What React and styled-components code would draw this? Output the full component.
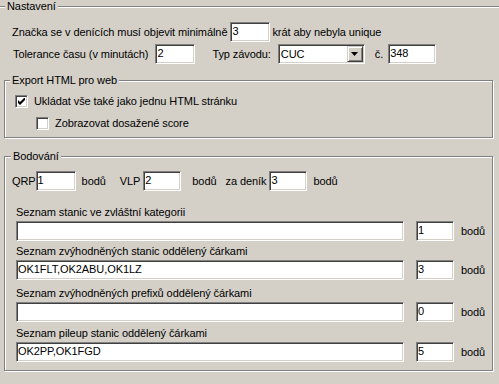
import React from 'react'
import styled, { createGlobalStyle } from 'styled-components'

const GlobalStyle = createGlobalStyle`
  html, body {
    margin: 0;
    padding: 0;
    background: #d4d0c8;
  }
  body {
    width: 499px;
    height: 384px;
    overflow: hidden;
    font-family: "Liberation Sans", Arial, sans-serif;
    font-size: 11px;
    letter-spacing: -0.08px;
    color: #000;
  }
`

const Outer = styled.section`
  margin-top: 6px;
  border-top: 1px solid #808080;
  box-shadow: inset 0 1px #fff;
`

const Group = styled.section`
  margin: ${p => p.$top}px 6px 0 4px;
  border: 1px solid #808080;
  box-shadow: inset 1px 1px #fff, 1px 1px #fff;
  padding-bottom: ${p => p.$bottom}px;
`

const Legend = styled.div`
  width: fit-content;
  margin: -7px 0 0 ${p => p.$indent}px;
  padding: 0 2px;
  line-height: 13px;
  height: 13px;
  background: #d4d0c8;
`

const Row = styled.div`
  display: flex;
  align-items: center;
  height: 20px;
  margin-top: ${p => p.$top || 0}px;
  padding-left: ${p => p.$left || 0}px;
  white-space: nowrap;
`

const Text = styled.span`
  margin-left: ${p => p.$ml || 0}px;
  margin-right: ${p => p.$mr || 0}px;
`

const Edit = styled.div`
  box-sizing: border-box;
  width: ${p => p.$w}px;
  height: 20px;
  flex: none;
  padding: 0 1px;
  line-height: 16px;
  background: #fff;
  border: 1px solid;
  border-color: #808080 #fff #fff #808080;
  box-shadow: inset 1px 1px #404040, inset -1px -1px #d4d0c8;
  margin-left: ${p => p.$ml || 0}px;
  margin-right: ${p => p.$mr || 0}px;
  overflow: hidden;
`

const Combo = styled(Edit)`
  display: flex;
  align-items: center;
  justify-content: space-between;
  padding: 1px;
`

const ComboText = styled.span`
  padding-left: 1px;
`

const DropButton = styled.div`
  box-sizing: border-box;
  width: 16px;
  height: 16px;
  display: flex;
  align-items: center;
  justify-content: center;
  background: #d4d0c8;
  border: 1px solid;
  border-color: #d4d0c8 #404040 #404040 #d4d0c8;
  box-shadow: inset 1px 1px #fff, inset -1px -1px #808080;
`

const CheckBox = styled.div`
  box-sizing: border-box;
  width: 13px;
  height: 13px;
  flex: none;
  background: #fff;
  border: 1px solid;
  border-color: #808080 #fff #fff #808080;
  box-shadow: inset 1px 1px #404040, inset -1px -1px #d4d0c8;
  display: flex;
  align-items: center;
  justify-content: center;
  margin-right: 6px;
`

const ListItem = styled.div`
  margin-top: ${p => p.$top}px;
  padding-left: 11px;
`

const ListLabel = styled.div`
  line-height: 14px;
  height: 14px;
  margin-bottom: 2px;
  white-space: nowrap;
`

const Check = ({ checked }) => (
  <CheckBox>
    {checked && (
      <svg width="7" height="7" viewBox="0 0 7 7">
        <path d="M0 2 L0 5 L2 7 L7 2 L7 -1 L2 4 Z" fill="#000" />
      </svg>
    )}
  </CheckBox>
)

const lists = [
  { label: 'Seznam stanic ve zvláštní kategorii', value: '', points: '1', top: 14 },
  { label: 'Seznam zvýhodněných stanic oddělený čárkami', value: 'OK1FLT,OK2ABU,OK1LZ', points: '3', top: 3 },
  { label: 'Seznam zvýhodněných prefixů oddělený čárkami', value: '', points: '0', top: 6 },
  { label: 'Seznam pileup stanic oddělený čárkami', value: 'OK2PP,OK1FGD', points: '5', top: 4 }
]

const App = () => (
  <>
    <GlobalStyle />
    <Outer>
      <Legend $indent={5}>Nastavení</Legend>
      <Row $top={9} $left={12}>
        <Text $mr={3}>Značka se v denících musí objevit minimálně</Text>
        <Edit $w={40} $mr={2}>3</Edit>
        <Text>krát aby nebyla unique</Text>
      </Row>
      <Row $top={2} $left={13}>
        <Text $mr={7}>Tolerance času (v minutách)</Text>
        <Edit $w={40}>2</Edit>
        <Text $ml={17} $mr={7}>Typ závodu:</Text>
        <Combo $w={87}>
          <ComboText>CUC</ComboText>
          <DropButton>
            <svg width="7" height="4" viewBox="0 0 7 4">
              <path d="M0 0 H7 L3.5 4 Z" fill="#000" />
            </svg>
          </DropButton>
        </Combo>
        <Text $ml={10} $mr={5}>č.</Text>
        <Edit $w={48}>348</Edit>
      </Row>

      <Group $top={16} $bottom={4}>
        <Legend $indent={5}>Export HTML pro web</Legend>
        <Row $top={4} $left={10}>
          <Check checked />
          <Text>Ukládat vše také jako jednu HTML stránku</Text>
        </Row>
        <Row $top={2} $left={31}>
          <Check />
          <Text>Zobrazovat dosažené score</Text>
        </Row>
      </Group>

      <Group $top={18} $bottom={8}>
        <Legend $indent={6}>Bodování</Legend>
        <Row $top={8} $left={7}>
          <Text $mr={0}>QRP</Text>
          <Edit $w={40} $mr={6}>1</Edit>
          <Text>bodů</Text>
          <Text $ml={14} $mr={3}>VLP</Text>
          <Edit $w={38} $mr={11}>2</Edit>
          <Text>bodů</Text>
          <Text $ml={9} $mr={3}>za deník</Text>
          <Edit $w={38} $mr={6}>3</Edit>
          <Text>bodů</Text>
        </Row>
        {lists.map(item => (
          <ListItem key={item.label} $top={item.top}>
            <ListLabel>{item.label}</ListLabel>
            <Row>
              <Edit $w={388} $mr={12}>{item.value}</Edit>
              <Edit $w={38} $mr={7}>{item.points}</Edit>
              <Text>bodů</Text>
            </Row>
          </ListItem>
        ))}
      </Group>
    </Outer>
  </>
)

export default App
